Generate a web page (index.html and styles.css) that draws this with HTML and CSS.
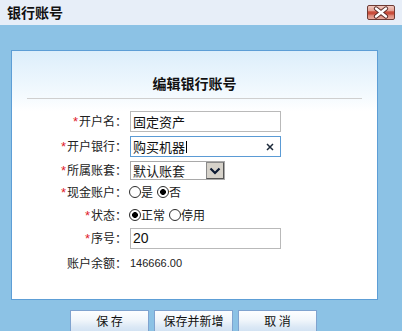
FILE: index.html
```html
<!DOCTYPE html>
<html lang="zh-CN">
<head>
<meta charset="utf-8">
<title>银行账号</title>
<link rel="stylesheet" href="styles.css">
</head>
<body>
<div class="titlebar">
  <span class="title">银行账号</span>
  <button class="close" aria-label="关闭">
    <svg width="28" height="15" viewBox="0 0 28 15">
      <path d="M9 3.5 L19 11.5 M19 3.5 L9 11.5" stroke="#5a2a26" stroke-width="4.2" stroke-linecap="round"/>
      <path d="M9 3.5 L19 11.5 M19 3.5 L9 11.5" stroke="#ffffff" stroke-width="2.4" stroke-linecap="round"/>
    </svg>
  </button>
</div>
<div class="main">
  <div class="panel">
    <div class="heading">编辑银行账号</div>
    <div class="form">
      <div class="row r1">
        <span class="lbl"><span class="req">*</span>开户名：</span>
        <div class="input">固定资产</div>
      </div>
      <div class="row r2">
        <span class="lbl"><span class="req">*</span>开户银行：</span>
        <div class="input focus">购买机器<span class="caret"></span>
          <svg class="clear" width="8" height="8" viewBox="0 0 8 8"><path d="M1 1 L7 7 M7 1 L1 7" stroke="#1d2a3a" stroke-width="1.5"/></svg>
        </div>
      </div>
      <div class="row r3">
        <span class="lbl"><span class="req">*</span>所属账套：</span>
        <div class="select"><span class="sel-text">默认账套</span>
          <span class="sel-btn"><svg width="12" height="8" viewBox="0 0 12 8"><path d="M1.5 1.5 L6 6 L10.5 1.5" fill="none" stroke="#0c1a33" stroke-width="2.2"/></svg></span>
        </div>
      </div>
      <div class="row r4">
        <span class="lbl"><span class="req">*</span>现金账户：</span>
        <div class="radios">
          <span class="radio"></span><span class="rtext">是</span>
          <span class="radio on gap"></span><span class="rtext">否</span>
        </div>
      </div>
      <div class="row r5">
        <span class="lbl"><span class="req">*</span>状态：</span>
        <div class="radios">
          <span class="radio on"></span><span class="rtext">正常</span>
          <span class="radio gap"></span><span class="rtext">停用</span>
        </div>
      </div>
      <div class="row r6">
        <span class="lbl"><span class="req">*</span>序号：</span>
        <div class="input num">20</div>
      </div>
      <div class="row r7">
        <span class="lbl">账户余额：</span>
        <span class="value">146666.00</span>
      </div>
    </div>
  </div>
  <div class="actions">
    <button class="btn">保 存</button>
    <button class="btn">保存并新增</button>
    <button class="btn">取 消</button>
  </div>
</div>
</body>
</html>
```
FILE: styles.css
```css
html, body {
  margin: 0;
  padding: 0;
  background: #8cc2e5;
  font-family: "Noto Sans CJK SC", "Liberation Sans", sans-serif;
  color: #1a1a1a;
}
.titlebar {
  height: 25px;
  background: #e7eef8;
  display: flex;
  align-items: center;
  justify-content: space-between;
  padding: 0 7px;
  box-sizing: border-box;
}
.title {
  font-size: 14px;
  font-weight: bold;
  line-height: 25px;
  color: #111;
}
.close {
  width: 28px;
  height: 15px;
  padding: 0;
  margin-top: -1px;
  border: 1px solid #6e3b35;
  border-radius: 2px;
  background: linear-gradient(#f2c9c0 0, #e4a295 35%, #c9503e 45%, #c84c3b 60%, #dd8d7e 75%, #e9a99c 100%);
  display: flex;
  align-items: center;
  justify-content: center;
  box-sizing: border-box;
  overflow: hidden;
}
.close svg { display: block; flex: none; }
.main {
  height: 306px;
  padding: 25px 0 0 11px;
  box-sizing: border-box;
  overflow: hidden;
}
.panel {
  width: 367px;
  height: 250px;
  box-sizing: border-box;
  border: 1px solid #5d9ed6;
  background: linear-gradient(#dceefb 0, #f4fafe 45px, #ffffff 60px);
}
.heading {
  margin: 0 15px;
  padding: 22px 0 5px;
  line-height: 20px;
  font-size: 14px;
  font-weight: bold;
  text-align: center;
  border-bottom: 1px solid #cfcfcf;
  color: #111;
}
.form {
  display: flex;
  flex-direction: column;
  padding-top: 12px;
}
.row {
  display: grid;
  grid-template-columns: 115px auto;
  column-gap: 3px;
  align-items: center;
  justify-items: start;
}
.r1 { height: 21px; }
.r2 { height: 21px; margin-top: 4px; }
.r3 { height: 19px; margin-top: 4px; }
.r4 { height: 20px; margin-top: 2px; }
.r5 { height: 20px; margin-top: 3px; }
.r6 { height: 21px; margin-top: 3px; }
.r7 { height: 20px; margin-top: 4px; }
.lbl {
  justify-self: end;
  font-size: 12px;
  line-height: 16px;
  color: #222;
  white-space: nowrap;
}
.req {
  color: #e0202a;
  font-family: "Liberation Sans", sans-serif;
  font-size: 13px;
  margin-right: 1px;
}
.input {
  position: relative;
  width: 151px;
  height: 21px;
  box-sizing: border-box;
  border: 1px solid #b9b9b9;
  background: #fff;
  padding: 0 2px;
  font-size: 13px;
  line-height: 19px;
  color: #111;
  display: flex;
  align-items: center;
}
.input.focus { border-color: #5b9bd5; }
.input.num {
  font-family: "Liberation Sans", sans-serif;
  font-size: 14px;
}
.caret {
  display: inline-block;
  width: 1px;
  height: 12px;
  background: #000;
  margin-left: 1px;
}
.clear {
  position: absolute;
  right: 6px;
  top: 6px;
}
.select {
  width: 95px;
  height: 19px;
  box-sizing: border-box;
  border: 1px solid #a9a9a9;
  background: #fff;
  display: flex;
  align-items: center;
  justify-content: space-between;
  font-size: 13px;
  line-height: 17px;
  padding-left: 2px;
}
.sel-btn {
  width: 18px;
  height: 17px;
  box-sizing: border-box;
  border: 1px solid;
  border-color: #8a8a8a #555 #555 #8a8a8a;
  background: #d6d2ca;
  display: flex;
  align-items: center;
  justify-content: center;
}
.sel-btn svg { display: block; }
.radios {
  display: flex;
  align-items: center;
  margin-left: -1px;
  font-size: 12px;
}
.radio {
  width: 12px;
  height: 12px;
  box-sizing: border-box;
  border: 1px solid #2b2b2b;
  border-radius: 50%;
  background: #fff;
}
.radio.on {
  background: radial-gradient(circle, #000 0 2.6px, #fff 3.2px);
}
.radio.gap { margin-left: 4px; }
.rtext { line-height: 16px; }
.value {
  font-family: "Liberation Sans", sans-serif;
  font-size: 11px;
  color: #222;
  margin-left: 0;
}
.actions {
  display: flex;
  gap: 5px;
  margin: 10px 0 0 59px;
}
.btn {
  width: 79px;
  height: 22px;
  padding: 0;
  box-sizing: border-box;
  border: 1px solid #7fa3cf;
  background: linear-gradient(#fdfeff 0, #f1f6fb 45%, #dbe8f5 80%, #d3e3f3 100%);
  font-family: "Noto Sans CJK SC", sans-serif;
  font-size: 12px;
  line-height: 20px;
  color: #111;
}
```
